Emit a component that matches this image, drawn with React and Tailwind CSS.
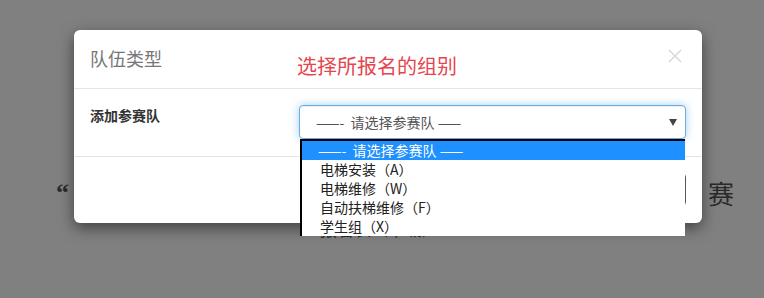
import React from 'react';

export default function App() {
  const options = ['电梯安装（A）', '电梯维修（W）', '自动扶梯维修（F）', '学生组（X）'];

  return (
    <div className="relative w-[764px] h-[298px] overflow-hidden bg-[#808080] font-['Noto_Sans_CJK_SC',sans-serif]">
      {/* page behind the backdrop */}
      <div className="pt-[173px] pl-[56px] pr-[30px] text-[#2a2a2a]">
        <div className="flex justify-between text-[26px] leading-[40px]">
          <span className="font-['Liberation_Serif','Noto_Sans_CJK_SC',serif] font-bold">“</span>
          <span>赛</span>
        </div>
        <div className="mt-[3px] ml-[264px] text-[17px] leading-[26px]">报名表（下载）</div>
      </div>

      {/* modal */}
      <div className="absolute left-[74px] top-[30px] w-[628px] rounded-[6px] bg-white shadow-[0_5px_15px_rgba(0,0,0,0.5)]">
        {/* header */}
        <div className="flex h-[59px] border-b border-[#e5e5e5] px-[16px]">
          <div className="w-[207px] pt-[15px] text-[18px] leading-[26px] text-[#777]">队伍类型</div>
          <div className="pt-[22px] text-[20px] leading-[28px] text-[#e5454e]">选择所报名的组别</div>
          <div className="ml-auto pt-[19px] pr-[4px]">
            <svg width="14" height="14" viewBox="0 0 14 14">
              <path d="M1 1 L13 13 M13 1 L1 13" stroke="#d4d4d4" strokeWidth="1.3" fill="none" />
            </svg>
          </div>
        </div>

        {/* body */}
        <div className="grid h-[68px] grid-cols-[209px_1fr] border-b border-[#e5e5e5] px-[16px] pt-[16px]">
          <div className="text-[14px] font-bold leading-[20px] text-[#333]">添加参赛队</div>
          <div className="flex h-[34px] items-center justify-between rounded-[4px] border border-[#66afe9] bg-white pl-[16px] pr-[8px] shadow-[inset_0_1px_1px_rgba(0,0,0,0.075),0_0_8px_rgba(102,175,233,0.6)]">
            <span className="text-[14px] text-[#555]">——-&nbsp; 请选择参赛队 ——</span>
            <svg width="8" height="7" viewBox="0 0 8 7">
              <path d="M0 0 L8 0 L4 7 Z" fill="#444" />
            </svg>
          </div>
        </div>

        {/* footer */}
        <div className="flex h-[66px] justify-end px-[16px] pt-[16px]">
          <button className="h-[33px] w-[80px] rounded-[4px] border border-[#555] bg-white text-[14px] text-[#333]">提交</button>
        </div>
      </div>

      {/* open select list */}
      <div className="absolute left-[300px] top-[139px] w-[385px] border-l-2 border-t-2 border-black bg-white text-[14px] leading-[19px]">
        <div className="h-[19px] bg-[#1e90ff] pl-[16px] text-white">——-&nbsp; 请选择参赛队 ——</div>
        {options.map((opt) => (
          <div key={opt} className="h-[19px] pl-[18px] text-[#222]">{opt}</div>
        ))}
      </div>
    </div>
  );
}
